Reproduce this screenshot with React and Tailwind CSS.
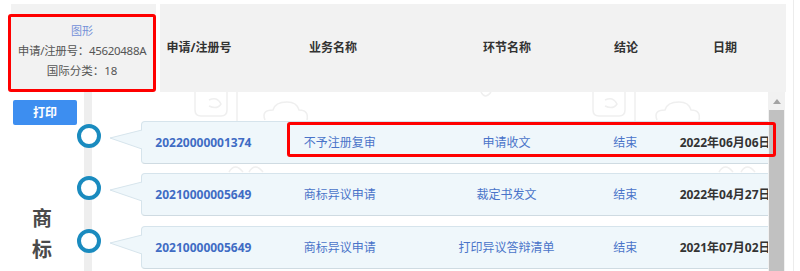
import React from "react";

const rows = [
  { no: "20220000001374", biz: "不予注册复审", step: "申请收文", res: "结束", date: "2022年06月06日" },
  { no: "20210000005649", biz: "商标异议申请", step: "裁定书发文", res: "结束", date: "2022年04月27日" },
  { no: "20210000005649", biz: "商标异议申请", step: "打印异议答辩清单", res: "结束", date: "2021年07月02日" },
];

function Tail() {
  return (
    <svg width="41" height="42" viewBox="0 0 41 42" className="shrink-0 -mr-px relative z-10">
      <polygon points="9,17 41,9 41,28" fill="#eff7fb" />
      <polyline points="41,9 9,17 41,28" fill="none" stroke="#d6e4ec" strokeWidth="1" />
    </svg>
  );
}

function Watermarks() {
  return (
    <svg width="700" height="180" viewBox="0 0 700 180" className="absolute left-0 top-0 pointer-events-none" fill="none" stroke="#efefef" strokeWidth="1.5">
      <path d="M66 0 v18 q0 6 6 6 h20 q6 0 6 -6 v-18" />
      <path d="M80 8 q8 -4 12 4 q-4 6 -12 2" />
      <line x1="108" y1="0" x2="108" y2="29" />
      <path d="M136 28 q-4 -10 8 -10 q2 -8 14 -8 q10 0 12 8 q10 0 8 10" />
      <path d="M352 0 q4 8 10 0" />
      <path d="M464 0 v18 q0 6 6 6 h20 q6 0 6 -6 v-18" />
      <path d="M476 8 q8 -4 12 4 q-4 6 -12 2" />
      <line x1="506" y1="0" x2="506" y2="29" />
      <path d="M528 28 q-4 -10 8 -10 q2 -8 14 -8 q10 0 12 8 q10 0 8 10" />
      <path d="M100 80 q6 -10 14 0 M120 80 q6 -10 14 0" />
      <path d="M590 80 q6 -10 14 0 M612 80 q6 -10 14 0" />
    </svg>
  );
}

export default function App() {
  return (
    <div
      className="relative w-[800px] h-[271px] bg-white overflow-hidden text-[12px] text-[#333]"
      style={{ fontFamily: '"Noto Sans", "Noto Sans CJK SC", sans-serif' }}
    >
      {/* top row */}
      <div className="flex h-[92px] pt-[4px]">
        <div className="ml-[8px] w-[148px] flex flex-col">
          <div className="ml-[3px] h-[10px] bg-[#f2f2f2]" />
          <div className="h-[78px] border-[3px] border-[#f00] rounded-[3px] bg-[#f2f2f2] flex flex-col items-center pt-[4px] leading-[20px] text-[#555]">
            <span className="text-[11px] text-[#7390d8]">图形</span>
            <span className="text-[11.5px] tracking-[-0.3px]">申请/注册号：45620488A</span>
            <span className="text-[11.5px]">国际分类：18</span>
          </div>
        </div>
        <div className="ml-[4px] w-[626px] bg-[#f2f2f2] flex items-center font-bold text-[#333]">
          <div className="w-[78px] text-center">申请/注册号</div>
          <div className="w-[190px] text-center">业务名称</div>
          <div className="w-[158px] text-center">环节名称</div>
          <div className="w-[80px] text-center">结论</div>
          <div className="w-[118px] text-center">日期</div>
        </div>
      </div>

      {/* body */}
      <div className="flex h-[179px]">
        <div className="w-[77px] shrink-0 flex flex-col">
          <div className="mt-[8px] ml-[13px] w-[64px] h-[25px] bg-[#3d8ef0] rounded-[2px] text-white font-bold flex items-center justify-center">
            打印
          </div>
          <div className="mt-auto mb-[6px] ml-[32px] flex flex-col text-[20px] font-bold leading-[31px] text-[#4a4a4a]">
            <span>商</span>
            <span>标</span>
          </div>
        </div>
        <div className="relative w-[691px] shrink-0 overflow-hidden">
          <div className="absolute left-[7px] top-0 bottom-0 w-[8px] bg-[#eeeeee]" />
          <div className="absolute left-[52px] top-0">
            <Watermarks />
          </div>
          <div className="relative flex flex-col pt-[29px] gap-[9px]">
            {rows.map((r, i) => (
              <div key={i} className={`flex items-start h-[43px] ${i === 2 ? "mt-[1px]" : ""}`}>
                <div className="mt-[3px] w-[24px] h-[24px] shrink-0 rounded-full border-[4px] border-[#1a8bbf] bg-white" />
                <Tail />
                <div className="w-[658px] h-[43px] shrink-0 flex items-center bg-[#eff7fb] border border-[#d6e4ec] border-b-[#cfdbe2] rounded-[4px]">
                  <div className="w-[123px] text-center font-bold text-[#3f6cc4]">{r.no}</div>
                  <div className="w-[150px] text-center text-[#4a74c9]">{r.biz}</div>
                  <div className="w-[184px] text-center text-[#4a74c9]">{r.step}</div>
                  <div className="w-[54px] text-center text-[#4a74c9]">{r.res}</div>
                  <div className="w-[146px] text-center font-bold text-[#333] whitespace-nowrap">{r.date}</div>
                </div>
              </div>
            ))}
          </div>
        </div>
        {/* scrollbar */}
        <div className="w-[17px] shrink-0 bg-[#f1f1f1] flex flex-col">
          <div className="h-[18px] flex items-center justify-center">
            <svg width="8" height="5" viewBox="0 0 8 5"><polygon points="0,5 4,0 8,5" fill="#a3a3a3" /></svg>
          </div>
          <div className="flex-1 mx-[1px] bg-[#c1c1c1]" />
        </div>
      </div>

      {/* page border */}
      <div className="absolute right-[6px] top-0 bottom-0 w-px bg-[#ececec]" />

      {/* annotation box */}
      <div className="absolute left-[287px] top-[122px] w-[489px] h-[35px] border-[3px] border-[#f00] rounded-[3px]" />
    </div>
  );
}
